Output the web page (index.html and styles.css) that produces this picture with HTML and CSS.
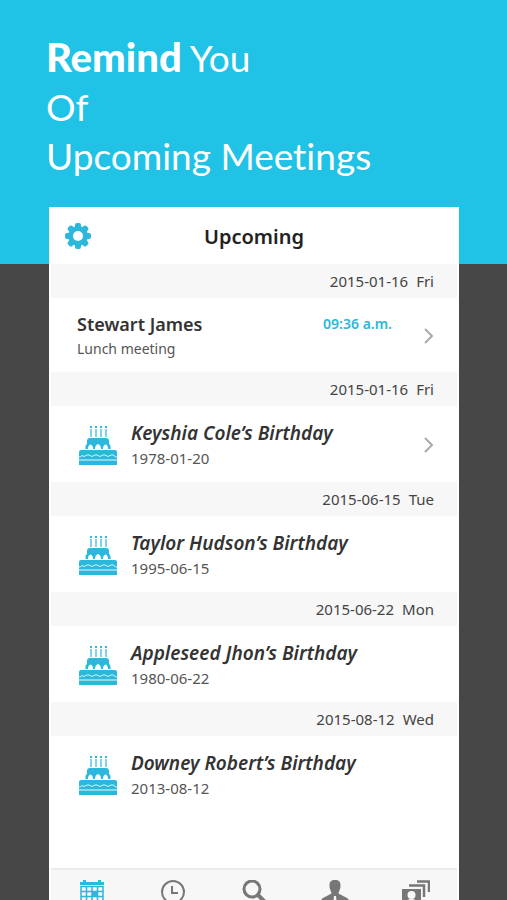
FILE: index.html
```html
<!DOCTYPE html>
<html lang="en">
<head>
<meta charset="utf-8">
<meta name="viewport" content="width=device-width, initial-scale=1">
<title>Upcoming</title>
<link rel="stylesheet" href="styles.css">
</head>
<body>
<svg class="sprite" aria-hidden="true">
  <symbol id="cake" viewBox="0 0 38 40">
    <path d="M11 4h2v8h-2zM16 4h2v8h-2zM21 4h2v8h-2zM26 4h2v8h-2z" opacity=".6"/>
    <path d="M11 1h2v2h-2zM16 1h2v2h-2zM21 1h2v2h-2zM26 1h2v2h-2z"/>
    <path d="M11 13h16q3 0 3 3v3q1.500.5 1.500 2.500v2.500H6.500v-2.500q0-2 1.500-2.500v-3q0-3 3-3z"/>
    <path d="M9 24q0-4 2.500-4.500 2.500.5 2.500 4.500zM16 24q0-4 3-5 3 1 3 5zM24 24q0-4 2.500-4.500 2.500.5 2.500 4.500z" fill="#fff"/>
    <path d="M2 25h34q2 0 2 2v13H0V27q0-2 2-2z"/>
    <path d="M0 32q2 0 3-1.500 2 2 4 0 2-1.500 4 0 2 2 4 0 2-1.500 4 0 2 2 4 0 2-1.500 4 0 2 2 4 0 2-1.500 4 0 1 1.500 3 1.500" fill="none" stroke="#fff" stroke-width="1" opacity=".8"/>
    <path d="M0 34.500h38v1H0z" fill="#fff" opacity=".9"/>
  </symbol>
</svg>
<main class="page">
  <header class="hero">
    <h1 class="headline"><strong>Remind</strong> You<br>Of<br>Upcoming Meetings</h1>
  </header>

  <section class="phone">
    <header class="navbar">
      <button class="settings" type="button" aria-label="Settings">
        <svg viewBox="0 0 26 26" width="26" height="26" aria-hidden="true">
          <g fill="currentColor">
            <rect x="10" y="0" width="6" height="26" rx="2"/>
            <rect x="10" y="0" width="6" height="26" rx="2" transform="rotate(45 13 13)"/>
            <rect x="10" y="0" width="6" height="26" rx="2" transform="rotate(90 13 13)"/>
            <rect x="10" y="0" width="6" height="26" rx="2" transform="rotate(135 13 13)"/>
            <circle cx="13" cy="13" r="10"/>
          </g>
          <circle cx="13" cy="13" r="5" fill="#fff"/>
        </svg>
      </button>
      <h2 class="title">Upcoming</h2>
    </header>

    <div class="agenda">
      <h3 class="date"><time datetime="2015-01-16">2015-01-16</time><span>Fri</span></h3>
      <a class="event meeting" href="#">
        <span class="details"><span class="name">Stewart James</span><span class="note">Lunch meeting</span></span>
        <span class="time">09:36 a.m.</span>
        <svg class="chevron" viewBox="0 0 10 16" aria-hidden="true"><path d="M1 1l7 7-7 7"/></svg>
      </a>

      <h3 class="date"><time datetime="2015-01-16">2015-01-16</time><span>Fri</span></h3>
      <a class="event birthday" href="#">
        <svg class="cake" aria-hidden="true"><use href="#cake"/></svg>
        <span class="details"><span class="name">Keyshia Cole’s Birthday</span><span class="note">1978-01-20</span></span>
        <svg class="chevron" viewBox="0 0 10 16" aria-hidden="true"><path d="M1 1l7 7-7 7"/></svg>
      </a>

      <h3 class="date"><time datetime="2015-06-15">2015-06-15</time><span>Tue</span></h3>
      <a class="event birthday" href="#">
        <svg class="cake" aria-hidden="true"><use href="#cake"/></svg>
        <span class="details"><span class="name">Taylor Hudson’s Birthday</span><span class="note">1995-06-15</span></span>
      </a>

      <h3 class="date"><time datetime="2015-06-22">2015-06-22</time><span>Mon</span></h3>
      <a class="event birthday" href="#">
        <svg class="cake" aria-hidden="true"><use href="#cake"/></svg>
        <span class="details"><span class="name">Appleseed Jhon’s Birthday</span><span class="note">1980-06-22</span></span>
      </a>

      <h3 class="date"><time datetime="2015-08-12">2015-08-12</time><span>Wed</span></h3>
      <a class="event birthday" href="#">
        <svg class="cake" aria-hidden="true"><use href="#cake"/></svg>
        <span class="details"><span class="name">Downey Robert’s Birthday</span><span class="note">2013-08-12</span></span>
      </a>
    </div>

    <nav class="tabs">
      <a class="tab active" href="#" aria-label="Calendar">
        <svg viewBox="0 0 24 26" aria-hidden="true">
          <path d="M0 2h3V0h3v2h12V0h3v2h3v3H0z" fill="currentColor"/>
          <path d="M1 6.500v18.500h22V6.500zM1 11.500h22M1 16.500h22M1 21h22M6.500 7v18M12 7v18M17.500 7v18" fill="none" stroke="currentColor" stroke-width="1.500"/>
          <path d="M12 12h6v5h-6z" fill="currentColor"/>
        </svg>
      </a>
      <a class="tab" href="#" aria-label="Recent">
        <svg viewBox="0 0 24 26" aria-hidden="true" fill="none" stroke="currentColor" stroke-width="2">
          <circle cx="12" cy="12" r="11"/><path d="M11 6v7h6"/>
        </svg>
      </a>
      <a class="tab" href="#" aria-label="Search">
        <svg viewBox="0 0 24 26" aria-hidden="true" fill="none" stroke="currentColor">
          <circle cx="10" cy="9" r="8" stroke-width="3"/><path d="M16 15l7 7" stroke-width="4"/>
        </svg>
      </a>
      <a class="tab" href="#" aria-label="Contacts">
        <svg class="wide" viewBox="0 0 28 26" aria-hidden="true" fill="currentColor">
          <path d="M14 0c4 0 5.500 2 5.500 5 0 1.500 0 2.500-.5 4-.5 2-1.500 3-1.500 4.500L26 18q2 1 2 4v4H0v-4q0-3 2-4l8.500-4.500C10.500 12 9.500 11 9 9c-.5-1.500-.5-2.500-.5-4 0-3 1.500-5 5.500-5z"/>
          <path d="M13 16h2l1 10h-4z" fill="#f7f7f7"/>
        </svg>
      </a>
      <a class="tab" href="#" aria-label="Cards">
        <svg class="wide" viewBox="0 0 28 26" aria-hidden="true">
          <path d="M15 1.500h12V12M7 5.500h15V17" fill="none" stroke="currentColor" stroke-width="2.500"/>
          <path d="M0 9h19v17H0z" fill="currentColor"/>
          <circle cx="9.500" cy="15" r="4" fill="#f7f7f7"/><path d="M3 25q0-6 6.500-6t6.500 6z" fill="#f7f7f7"/>
        </svg>
      </a>
    </nav>
  </section>
</main>
</body>
</html>
```
FILE: styles.css
```css
* {
  box-sizing: border-box;
}

body {
  margin: 0;
  background: #474747;
  font-family: "Noto Sans", "Open Sans", sans-serif;
  color: #333;
}

.sprite {
  display: none;
}

.page {
  height: 100vh;
  overflow: hidden;
}

.hero {
  padding: 33px 46px 84px;
  background: #20c2e6;
}

.headline {
  margin: 0;
  color: #fff;
  font: 400 37px/49px Lato, sans-serif;
  font-variant-ligatures: none;
}

.headline strong {
  font-size: 40px;
  font-weight: 900;
}

.phone {
  position: relative;
  margin: -57px 48px 0 49px;
  padding: 0 2px;
  background: #fff;
}

.navbar {
  display: grid;
  grid-template-columns: 26px 1fr 26px;
  align-items: center;
  height: 57px;
  padding: 0 14px;
}

.settings {
  display: flex;
  padding: 0;
  border: 0;
  background: none;
  color: #2bb8dc;
}

.title {
  margin: 0;
  padding-top: 2px;
  color: #222;
  font-size: 20px;
  line-height: 28px;
  font-weight: 600;
  text-align: center;
}

.agenda {
  min-height: 604px;
}

.date {
  display: flex;
  justify-content: flex-end;
  gap: 8px;
  margin: 0;
  padding: 0 23px;
  background: #f7f7f7;
  color: #444;
  font-size: 15px;
  line-height: 34px;
  font-weight: 400;
}

.event {
  display: flex;
  align-items: center;
  height: 76px;
  padding: 2px 23px 0 28px;
  color: inherit;
  text-decoration: none;
}

.meeting {
  height: 74px;
  padding-left: 26px;
}

.birthday {
  gap: 14px;
}

.cake {
  width: 38px;
  height: 40px;
  fill: #2bb8dc;
}

.details {
  display: flex;
  flex: 1;
  flex-direction: column;
}

.name {
  font-size: 18px;
  line-height: 26px;
  font-weight: 600;
}

.birthday .name {
  font-size: 19px;
  font-style: italic;
}

.note {
  color: #555;
  font-size: 15px;
  line-height: 24px;
}

.meeting .note {
  font-size: 14px;
}

.time {
  align-self: flex-start;
  margin: 14px 32px 0 0;
  color: #2bb8dc;
  font-size: 14px;
  line-height: 20px;
  font-weight: 600;
}

.chevron {
  width: 10px;
  height: 16px;
  fill: none;
  stroke: #aaa;
  stroke-width: 2;
}

.tabs {
  display: flex;
  padding-top: 10px;
  border-top: 2px solid #ececec;
  background: #f7f7f7;
}

.tab {
  display: flex;
  flex: 1;
  justify-content: center;
  height: 48px;
  color: #777;
}

.tab svg {
  width: 24px;
  height: 26px;
}

.tab .wide {
  width: 28px;
}

.active {
  color: #2bb8dc;
}
```
